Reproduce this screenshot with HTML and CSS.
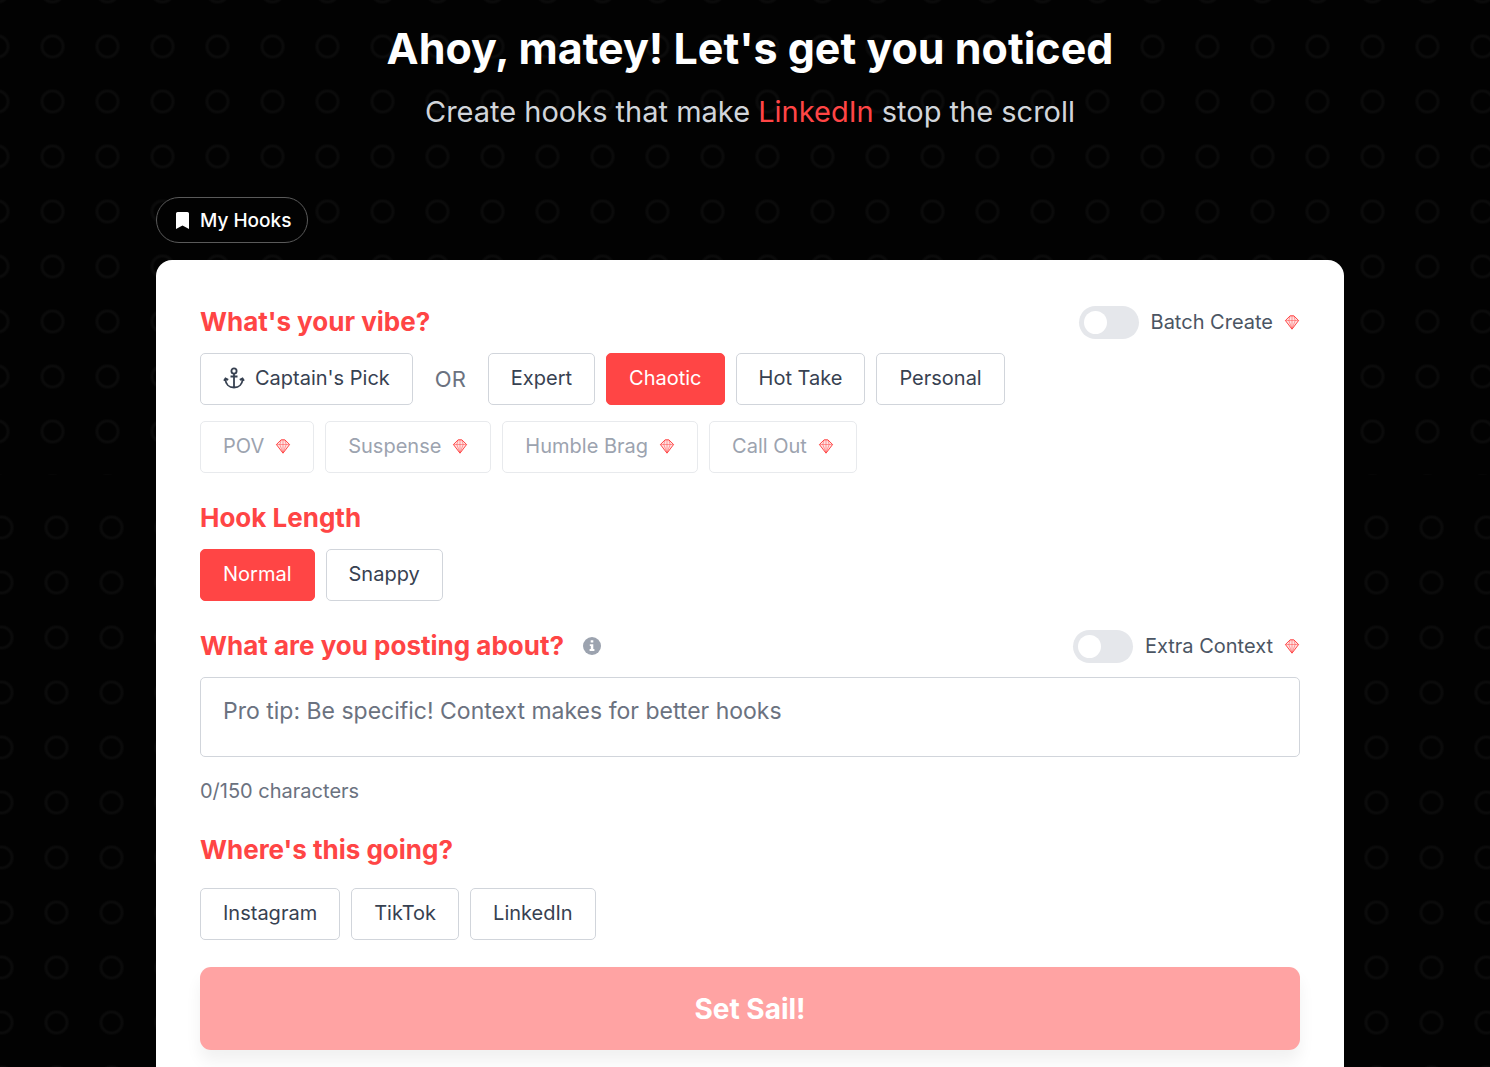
FILE: index.html
```html
<!DOCTYPE html>
<html lang="en">
  <head>
    <meta charset="UTF-8" />
    <meta name="viewport" content="width=device-width, initial-scale=1.0" />
    <title>Hook Generator</title>
    <link rel="stylesheet" href="styles.css">
  </head>
  <body>
    <!-- Shared icons -->
    <svg class="sprite" aria-hidden="true">
      <symbol id="gem" viewBox="0 0 16 16">
        <path d="M6.2 1.800h3.600L14.600 6.500 8 15.200 1.400 6.500z" fill="#ffe3e3" stroke="#ff4545" stroke-width="1" stroke-linejoin="round" />
        <path d="M1.400 6.500h13.200M6.200 1.800 4.800 6.500 8 15l3.200-8.500-1.400-4.700M8 1.800V15" fill="none" stroke="#ff4545" stroke-width="0.5" />
      </symbol>
    </svg>

    <div class="page">
      <header class="hero">
        <h1>Ahoy, matey! Let's get you noticed</h1>
        <p>Create hooks that make <span>LinkedIn</span> stop the scroll</p>
      </header>

      <button class="my-hooks" type="button">
        <svg width="13" height="17" viewBox="0 0 13 17" aria-hidden="true">
          <path d="M1.6 0h9.8A1.6 1.6 0 0 1 13 1.6V17l-6.5-3.6L0 17V1.6A1.6 1.6 0 0 1 1.6 0z" fill="#fff" />
        </svg>
        My Hooks
      </button>

      <form class="card">
        <!-- Vibe -->
        <section>
          <div class="section-head">
            <h2>What's your vibe?</h2>
            <label class="toggle">
              <input type="checkbox" role="switch" />
              Batch Create
              <svg class="gem"><use href="#gem" /></svg>
            </label>
          </div>
          <div class="options">
            <button type="button" class="option">
              <svg class="anchor" viewBox="0 0 22 22" aria-hidden="true">
                <circle cx="11" cy="4" r="2.6" />
                <path d="M11 6.600V20.500M7.500 9.500h7M1 13.800l1.500-2.300 2.700 1.400M2.400 12c.2 5.200 3.600 8.500 8.600 8.500s8.400-3.300 8.600-8.500M21 13.800l-1.500-2.300-2.700 1.400" />
              </svg>
              Captain's Pick
            </button>
            <span class="or">OR</span>
            <button type="button" class="option">Expert</button>
            <button type="button" class="option selected">Chaotic</button>
            <button type="button" class="option">Hot Take</button>
            <button type="button" class="option">Personal</button>
          </div>
          <div class="options locked">
            <button type="button" class="option">POV <svg class="gem"><use href="#gem" /></svg></button>
            <button type="button" class="option">Suspense <svg class="gem"><use href="#gem" /></svg></button>
            <button type="button" class="option">Humble Brag <svg class="gem"><use href="#gem" /></svg></button>
            <button type="button" class="option">Call Out <svg class="gem"><use href="#gem" /></svg></button>
          </div>
        </section>

        <!-- Length -->
        <section>
          <div class="section-head">
            <h2>Hook Length</h2>
          </div>
          <div class="options">
            <button type="button" class="option selected">Normal</button>
            <button type="button" class="option">Snappy</button>
          </div>
        </section>

        <!-- Topic -->
        <section>
          <div class="section-head">
            <h2><label for="topic">What are you posting about?</label></h2>
            <svg class="info" viewBox="0 0 18 18" aria-hidden="true">
              <circle cx="9" cy="9" r="9" fill="#9ca3af" />
              <path d="M7.7 3.2h2.6v2.4H7.700zM6.800 7.200h3.500v4.800h1.100v2H6.600v-2h1.200V9.100h-1z" fill="#fff" />
            </svg>
            <label class="toggle">
              <input type="checkbox" role="switch" />
              Extra Context
              <svg class="gem"><use href="#gem" /></svg>
            </label>
          </div>
          <textarea id="topic" rows="1" maxlength="150" placeholder="Pro tip: Be specific! Context makes for better hooks"></textarea>
          <p class="counter">0/150 characters</p>
        </section>

        <!-- Platform -->
        <section>
          <div class="section-head platform-head">
            <h2>Where's this going?</h2>
          </div>
          <div class="options">
            <button type="button" class="option">Instagram</button>
            <button type="button" class="option">TikTok</button>
            <button type="button" class="option">LinkedIn</button>
          </div>
        </section>

        <button class="submit" type="submit" disabled>Set Sail!</button>
      </form>
    </div>
  </body>
</html>
```
FILE: styles.css
```css
:root {
  --red: #ff4545;
  --ring: radial-gradient(circle, transparent 8px, #0b0b0b 10px, #0b0b0b 11px, transparent 13px);
}
* {
  box-sizing: border-box;
}
body {
  margin: 0;
  min-height: 100vh;
  position: relative;
  background-color: #020202;
  font-family: Inter, "Open Sans", sans-serif;
  color: #374151;
}
/* Faint ring pattern, in two bands */
body::before,
body::after {
  content: "";
  position: absolute;
  left: 0;
  right: 0;
  z-index: -1;
  background-image: var(--ring);
  background-size: 55px 55px;
}
body::before {
  top: 0;
  height: 475px;
  background-position: 25px 19px;
}
body::after {
  top: 500px;
  bottom: 0;
  background-position: 29px 0;
}
button,
textarea {
  font-family: inherit;
}
.sprite {
  display: none;
}
.page {
  padding: 20px 146px 0 156px;
}
/* Header */
.hero {
  text-align: center;
}
.hero h1 {
  margin: 0;
  color: #fff;
  font-size: 43px;
  line-height: 56px;
  font-weight: 700;
}
.hero p {
  margin: 14px 0 0;
  color: #d1d5db;
  font-size: 29px;
  line-height: 44px;
}
.hero span {
  color: var(--red);
}
.my-hooks {
  display: flex;
  align-items: center;
  gap: 11px;
  height: 46px;
  margin: 63px 0 17px;
  padding: 0 16px 0 19px;
  border: 1px solid #5a5a5a;
  border-radius: 23px;
  background: #020202;
  color: #fff;
  font-size: 19px;
  font-weight: 500;
}
/* Card */
.card {
  padding: 44px 44px 60px;
  border-radius: 16px;
  background: #fff;
}
section {
  margin-bottom: 27px;
}
.section-head {
  display: flex;
  align-items: center;
  height: 36px;
  margin-bottom: 13px;
}
.platform-head {
  margin-bottom: 20px;
}
h2 {
  margin: 0;
  color: var(--red);
  font-size: 26px;
  line-height: 36px;
  font-weight: 700;
}
.info {
  width: 18px;
  height: 18px;
  margin-left: 19px;
}
.toggle {
  display: flex;
  align-items: center;
  margin-left: auto;
  color: #4b5563;
  font-size: 20px;
}
.toggle input {
  appearance: none;
  width: 60px;
  height: 33px;
  margin: 0 12px 0 0;
  padding: 5px;
  border-radius: 17px;
  background: #e5e7eb;
}
.toggle input::before {
  content: "";
  display: block;
  width: 23px;
  height: 23px;
  border-radius: 50%;
  background: #fff;
}
.toggle input:checked::before {
  margin-left: auto;
}
.gem {
  width: 16px;
  height: 16px;
  margin-left: 11px;
}
.options {
  display: flex;
  flex-wrap: wrap;
  align-items: center;
  gap: 11px;
}
.option {
  display: flex;
  align-items: center;
  height: 52px;
  padding: 0 22px 2px;
  border: 1px solid #d1d5db;
  border-radius: 5px;
  background: #fff;
  color: #374151;
  font-size: 20px;
}
.option.selected {
  border-color: var(--red);
  background: var(--red);
  color: #fff;
}
.anchor {
  width: 22px;
  height: 22px;
  margin-right: 10px;
  fill: none;
  stroke: #374151;
  stroke-width: 1.8;
}
.or {
  padding: 0 11px;
  color: #6b7280;
  font-size: 22px;
}
.locked {
  margin-top: 16px;
}
.locked .option {
  border-color: #e8eaed;
  color: #9ca3af;
}
textarea {
  display: block;
  width: 100%;
  height: 80px;
  padding: 18px 22px;
  border: 1px solid #d1d5db;
  border-radius: 5px;
  resize: none;
  font-size: 23px;
  line-height: 30px;
}
textarea::placeholder {
  color: #6b7280;
}
.counter {
  margin: 20px 0 0;
  color: #6b7280;
  font-size: 20px;
  line-height: 28px;
}
.submit {
  display: block;
  width: 100%;
  height: 83px;
  border: none;
  border-radius: 11px;
  background: #ffa3a3;
  box-shadow: 0 11px 16px rgba(0, 0, 0, 0.06);
  color: #fff;
  font-size: 28px;
  font-weight: 700;
}
```
